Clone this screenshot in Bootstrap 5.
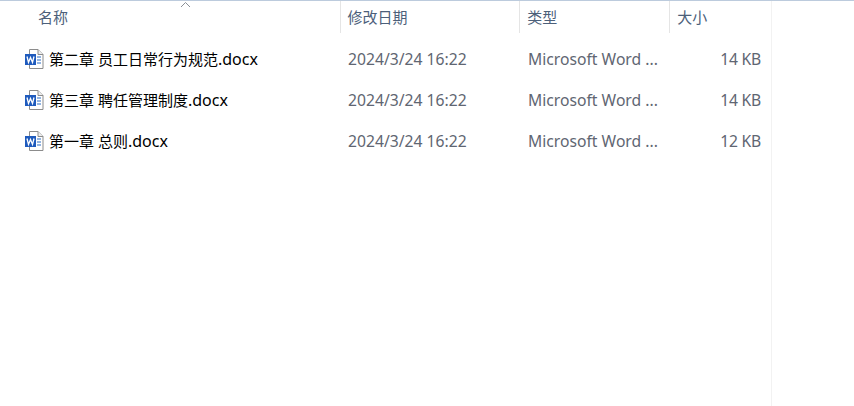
<!DOCTYPE html>
<html lang="zh-CN">
<head>
<meta charset="utf-8">
<title>文件列表</title>
<link href="https://cdn.jsdelivr.net/npm/bootstrap@5.3.0/dist/css/bootstrap.min.css" rel="stylesheet">
<style>
html,body{height:100%;margin:0;background:#fff;overflow:hidden}
body{font-family:"Noto Sans","Noto Sans CJK SC",sans-serif;font-size:15px;line-height:20px;border-top:1px solid #bccbdd}
.pane{width:772px;height:405px;border-right:1px solid #f2f2f2}
.head-row{height:32px;position:relative;color:#4c607a}
.head-row>div{padding-left:7px;height:32px;display:flex;align-items:center}
.head-row .cell-name{padding-left:38px;border-right:1px solid #e5e5e5;width:341px}
.head-row .cell-date{border-right:1px solid #e5e5e5;width:180px}
.head-row .cell-type{border-right:1px solid #e5e5e5;width:150px}
.head-row .cell-size{width:101px}
.sort-caret{position:absolute;left:179px;top:0;width:13px;height:7px}
.file-list{padding-top:5px}
.file-row{height:41px;color:#5f6672}
.file-row .cell-name{width:341px;padding-left:25px;gap:4px;color:#000}
.file-row .cell-date{padding-left:7px;width:180px}
.file-row .cell-type{padding-left:7px;width:150px}
.file-row .cell-size{width:100px;padding-right:10px;text-align:right;letter-spacing:-.25px}
.latin-run{font-size:15.7px}
.ext-run{font-size:16px}
.file-ico{width:20px;height:20px;flex:none}
</style>
</head>
<body>
<div class="pane">
  <div class="head-row d-flex">
    <div class="cell-name">名称</div>
    <div class="cell-date">修改日期</div>
    <div class="cell-type">类型</div>
    <div class="cell-size">大小</div>
    <svg class="sort-caret" viewBox="0 0 13 7" fill="none" stroke="#8a8f96" stroke-width="1"><path d="M2 6 6.500 1.500 11 6"/></svg>
  </div>
  <div class="file-list">
    <div class="file-row d-flex align-items-center">
      <div class="cell-name d-flex align-items-center">
        <svg class="file-ico" viewBox="0 0 20 20"><path d="M4.500 .5H13L18 5.500V19.500H4.500Z" fill="#fff" stroke="#8c8c8c"/><path d="M13 .5V5.500H18" fill="#eee" stroke="#8c8c8c"/><path d="M12 8h4M12 11h4M12 14h4" stroke="#2b6cc4" stroke-width="1.200"/><rect x="0" y="5" width="11" height="11" fill="#1f5bbd"/><path d="M2 7.500 3.500 13.500 5.500 8.500 7.500 13.500 9 7.500" fill="none" stroke="#fff" stroke-width="1.300"/></svg>
        <span>第二章 员工日常行为规范<span class="ext-run">.docx</span></span>
      </div>
      <div class="cell-date latin-run">2024/3/24 16:22</div>
      <div class="cell-type latin-run">Microsoft Word ...</div>
      <div class="cell-size latin-run">14 KB</div>
    </div>
    <div class="file-row d-flex align-items-center">
      <div class="cell-name d-flex align-items-center">
        <svg class="file-ico" viewBox="0 0 20 20"><path d="M4.500 .5H13L18 5.500V19.500H4.500Z" fill="#fff" stroke="#8c8c8c"/><path d="M13 .5V5.500H18" fill="#eee" stroke="#8c8c8c"/><path d="M12 8h4M12 11h4M12 14h4" stroke="#2b6cc4" stroke-width="1.200"/><rect x="0" y="5" width="11" height="11" fill="#1f5bbd"/><path d="M2 7.500 3.500 13.500 5.500 8.500 7.500 13.500 9 7.500" fill="none" stroke="#fff" stroke-width="1.300"/></svg>
        <span>第三章 聘任管理制度<span class="ext-run">.docx</span></span>
      </div>
      <div class="cell-date latin-run">2024/3/24 16:22</div>
      <div class="cell-type latin-run">Microsoft Word ...</div>
      <div class="cell-size latin-run">14 KB</div>
    </div>
    <div class="file-row d-flex align-items-center">
      <div class="cell-name d-flex align-items-center">
        <svg class="file-ico" viewBox="0 0 20 20"><path d="M4.500 .5H13L18 5.500V19.500H4.500Z" fill="#fff" stroke="#8c8c8c"/><path d="M13 .5V5.500H18" fill="#eee" stroke="#8c8c8c"/><path d="M12 8h4M12 11h4M12 14h4" stroke="#2b6cc4" stroke-width="1.200"/><rect x="0" y="5" width="11" height="11" fill="#1f5bbd"/><path d="M2 7.500 3.500 13.500 5.500 8.500 7.500 13.500 9 7.500" fill="none" stroke="#fff" stroke-width="1.300"/></svg>
        <span>第一章 总则<span class="ext-run">.docx</span></span>
      </div>
      <div class="cell-date latin-run">2024/3/24 16:22</div>
      <div class="cell-type latin-run">Microsoft Word ...</div>
      <div class="cell-size latin-run">12 KB</div>
    </div>
  </div>
</div>
<script src="https://cdn.jsdelivr.net/npm/bootstrap@5.3.0/dist/js/bootstrap.bundle.min.js"></script>
</body>
</html>
